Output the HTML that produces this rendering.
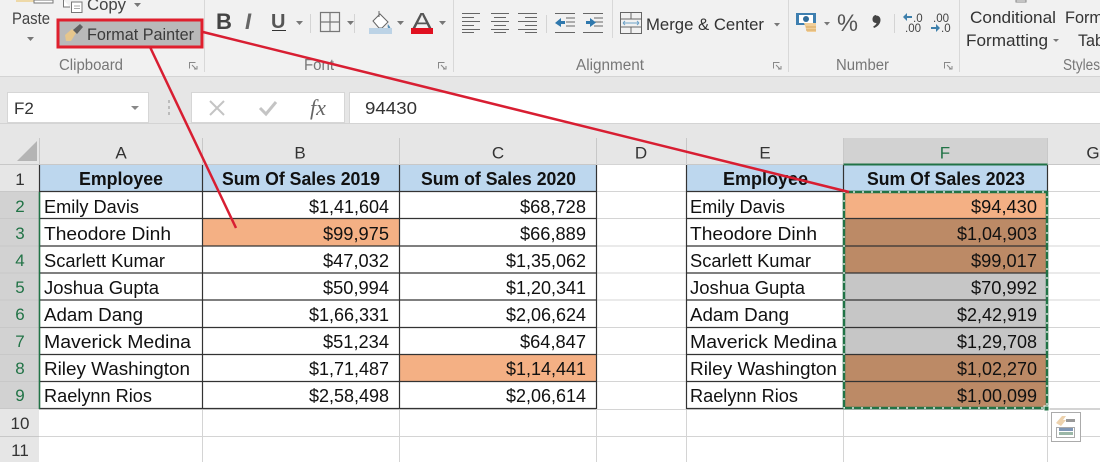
<!DOCTYPE html>
<html><head><meta charset="utf-8"><style>
html,body{margin:0;padding:0;background:#fff;width:1100px;height:462px;overflow:hidden}
svg{display:block}
text{font-family:"Liberation Sans",sans-serif}
.c{font-size:18px;fill:#111}
.b{font-size:18px;font-weight:bold;fill:#111}
.r{font-size:17px;fill:#444}
.g{font-size:15.5px;fill:#777}
.h{font-size:17px;fill:#333}
</style></head><body>
<svg width="1100" height="462" viewBox="0 0 1100 462" xmlns="http://www.w3.org/2000/svg">
<rect width="1100" height="462" fill="#fff"/>
<!-- ribbon -->
<rect width="1100" height="76" fill="#f1f1f1"/>
<rect y="76" width="1100" height="62" fill="#e6e6e6"/>
<rect y="76" width="1100" height="1" fill="#d4d4d4"/>
<g stroke="#d8d8d8" fill="none">
<path d="M204.500 0V72M453.500 0V72M612.500 0V38M788.500 0V72M959.500 0V72"/>
<path d="M310.500 14V33M354.500 14V33M546.500 15V33M894.500 14V33" stroke="#d4d4d4"/>
</g>
<!-- paste -->
<rect x="16" y="0" width="18" height="2" fill="#eed9a8"/><rect x="34" y="0" width="19" height="3" fill="#fff" stroke="#777"/>
<text class="r" x="12" y="24" textLength="38" lengthAdjust="spacingAndGlyphs">Paste</text>
<path d="M27 37h7l-3.500 4z" fill="#777"/>
<!-- copy -->
<path d="M63.500 0V7H70M71.500 2H82V12.500H71.500Z" fill="#fff" stroke="#777"/><path d="M74 6h6M74 8.500h6" stroke="#aaa"/>
<text class="r" x="87" y="10" textLength="39" lengthAdjust="spacingAndGlyphs">Copy</text>
<path d="M134 3h7l-3.500 4z" fill="#777"/>
<!-- format painter -->
<rect x="58" y="20" width="144" height="27" fill="#b9b9b9" stroke="#df1f2d" stroke-width="3"/>
<path d="M65 35l7-6 4 4-5 8h-5z" fill="#e6c68c"/><path d="M73 30l7-6 3 3-6 7z" fill="#5f5f5f"/>
<text x="87" y="40" font-size="16.500" fill="#3b3b3b" textLength="107" lengthAdjust="spacingAndGlyphs">Format Painter</text>
<text class="g" x="59" y="70" textLength="64" lengthAdjust="spacingAndGlyphs">Clipboard</text>
<text class="g" x="304" y="70" textLength="30" lengthAdjust="spacingAndGlyphs">Font</text>
<text class="g" x="576" y="70" textLength="68" lengthAdjust="spacingAndGlyphs">Alignment</text>
<text class="g" x="836" y="70" textLength="53" lengthAdjust="spacingAndGlyphs">Number</text>
<text class="g" x="1063" y="70" textLength="37" lengthAdjust="spacingAndGlyphs">Styles</text>
<g fill="none" stroke="#888"><path d="M189.500 68.500V62.500H195.500M192 65l4 4M194 69h3v-3"/><path d="M438.500 68.500V62.500H444.500M441 65l4 4M443 69h3v-3"/><path d="M773.500 68.500V62.500H779.500M776 65l4 4M778 69h3v-3"/><path d="M944.500 68.500V62.500H950.500M947 65l4 4M949 69h3v-3"/></g>
<!-- font -->
<text x="216" y="29" font-size="22" font-weight="bold" fill="#444">B</text>
<text x="245" y="29" font-size="22" font-weight="bold" font-style="italic" fill="#666">I</text>
<text x="271" y="28" font-size="20" font-weight="bold" fill="#555">U</text><rect x="272" y="30" width="14" height="1" fill="#333"/>
<path d="M296 21h7l-3.500 4zM347 21h7l-3.500 4zM397 21h7l-3.500 4zM439 21h7l-3.500 4z" fill="#777"/>
<path d="M320.500 12.500H339.500V31.500H320.500ZM320.500 22H339.500M330 12.500V31.500" fill="none" stroke="#777" stroke-width="1.200"/>
<path d="M373 21l7-7 8 8-6 6h-3z" fill="#fff" stroke="#666"/><path d="M379 11v6" stroke="#666"/><path d="M388 24c1 2 3 3 2 5-2 0-3-2-2-5z" fill="#5a8fb5"/>
<rect x="369" y="28" width="23" height="6" fill="#bcd3e6"/>
<text x="412" y="29" font-size="23" fill="#555" textLength="20" lengthAdjust="spacingAndGlyphs">A</text><rect x="411" y="28" width="22" height="6" fill="#e01020"/>
<!-- alignment -->
<g stroke="#666" fill="none" stroke-width="1">
<path d="M462 13.500h18M462 17.500h12M462 21.500h18M462 25.500h12M462 29.500h18 M462 32.500h12" />
<path d="M491 13.500h18M494 17.500h12M491 21.500h18M494 25.500h12M491 29.500h18M494 32.500h12"/>
<path d="M518 13.500h19M525 17.500h12M518 21.500h19M525 25.500h12M518 29.500h19M525 32.500h12"/>
<path d="M555 13.500h20M566 18h9M566 22h9M566 26h9M555 32.500h20M583 13.500h20M594 18h9M594 22h9M594 26h9M583 32.500h20"/>
<path d="M620.500 12.500H641.500V33.500H620.500ZM620.500 19H641.500M620.500 27H641.500M631 12.500V19M631 27V33.500"/>
</g>
<path d="M555 23l6-5v3h4v3h-4v3zM590 21v3h-4v-3h4zM590 18l6 4.500-6 4.500z" fill="#2f78ad"/>
<path d="M623 23h16M623 23l2-2M623 23l2 2M639 23l-2-2M639 23l-2 2" stroke="#6da2c8" fill="none"/>
<text x="646" y="30" font-size="17" fill="#333" textLength="118" lengthAdjust="spacingAndGlyphs">Merge &amp; Center</text>
<path d="M774 23h6l-3 3.500z" fill="#777"/>
<!-- number -->
<rect x="796" y="13" width="20" height="12" fill="#3e7fb0"/><rect x="799" y="15" width="14" height="8" fill="#fff"/><circle cx="806" cy="19" r="3" fill="#2f6c9a"/>
<path d="M804 23h12v9h-9z" fill="#f1cf9a"/><path d="M806 27h10M806 30h10" stroke="#d9a860"/>
<path d="M824 22h6l-3 3.500z" fill="#777"/>
<text x="837" y="31" font-size="24" fill="#555" textLength="21" lengthAdjust="spacingAndGlyphs">%</text>
<path d="M876 15.500c3 0 4.500 2 4.500 4.500 0 3.500-2.500 6.500-6.500 8l-.8-1.500c1.800-1 3-2.200 3.300-3.500-2.300 .2-4-1.200-4-3.700 0-2.400 1.500-4.300 3.500-4.300z" fill="#444"/>
<path d="M903 17l4-4v3h5v2h-5v3zM931 27h5v-3l4 4-4 4v-3h-5z" fill="#3d7fab"/>
<text x="913" y="22" font-size="11.500" fill="#444">.0</text><text x="905" y="32" font-size="11.500" fill="#444">.00</text>
<text x="933" y="22" font-size="11.500" fill="#444">.00</text><text x="941" y="32" font-size="11.500" fill="#444">.0</text>
<!-- styles -->
<rect x="1016" y="0" width="10" height="2" fill="#fff" stroke="#888"/>
<text class="h" x="970" y="23" textLength="86" lengthAdjust="spacingAndGlyphs">Conditional</text>
<text class="h" x="966" y="46" textLength="82" lengthAdjust="spacingAndGlyphs">Formatting</text>
<path d="M1053 39h6l-3 3z" fill="#777"/>
<text class="h" x="1065" y="23" textLength="38" lengthAdjust="spacingAndGlyphs">Form</text>
<text class="h" x="1078" y="46" textLength="26" lengthAdjust="spacingAndGlyphs">Tab</text>
<!-- formula bar -->
<rect x="7.500" y="92.500" width="141" height="30" fill="#fff" stroke="#d6d6d6"/>
<text x="14" y="114" font-size="17" fill="#333">F2</text>
<path d="M131 106h8l-4 4z" fill="#888"/>
<rect x="168" y="100" width="2" height="3" fill="#bbb"/><rect x="168" y="106" width="2" height="3" fill="#bbb"/><rect x="168" y="112" width="2" height="3" fill="#bbb"/>
<rect x="191.500" y="92.500" width="153" height="30" fill="#fff" stroke="#d6d6d6"/>
<path d="M210 101l14 14M224 101l-14 14" stroke="#c4c4c4" stroke-width="2" fill="none"/>
<path d="M260 108l6 6 10-12" stroke="#c4c4c4" stroke-width="3" fill="none"/>
<text x="310" y="115" font-size="22" font-style="italic" fill="#666" style="font-family:'Liberation Serif',serif">fx</text>
<rect x="349" y="92" width="751" height="31" fill="#fff"/><path d="M349.500 123V92.500H1100" fill="none" stroke="#d6d6d6"/>
<text x="365" y="114" font-size="17.500" fill="#333" textLength="52" lengthAdjust="spacingAndGlyphs">94430</text>
<rect y="123" width="1100" height="1" fill="#d4d4d4"/>
<!-- headers -->
<rect x="0" y="138" width="1100" height="27" fill="#e6e6e6"/>
<rect x="0" y="165" width="39" height="297" fill="#e6e6e6"/>
<rect x="0" y="192" width="39" height="217" fill="#d2d2d2"/>
<rect x="843" y="138" width="204" height="27" fill="#d2d2d2"/>
<path d="M37 141v20H17z" fill="#b4b4b4"/>
<g stroke="#c8c8c8" fill="none">
<path d="M39.500 138V165M202.500 138V165M399.500 138V165M596.500 138V165M686.500 138V165M843.500 138V165M1047.500 138V165"/>
<path d="M0 164.500H1100M0 191.500H39M0 218.500H39M0 246H39M0 273H39M0 300H39M0 327.500H39M0 354.500H39M0 381.500H39M0 408.500H39M0 436.500H39"/>
</g>
<g font-size="17" text-anchor="middle" fill="#333">
<text x="121" y="158.500">A</text><text x="300" y="158.500">B</text><text x="498" y="158.500">C</text><text x="641" y="158.500">D</text><text x="765" y="158.500">E</text><text x="945" y="158.500" fill="#217346">F</text><text x="1093" y="158.500">G</text>
<text x="20" y="185">1</text></g>
<g font-size="17" text-anchor="middle" fill="#217346">
<text x="20" y="212">2</text><text x="20" y="239">3</text><text x="20" y="266">4</text><text x="20" y="293">5</text><text x="20" y="320">6</text><text x="20" y="347">7</text><text x="20" y="374">8</text><text x="20" y="401">9</text></g>
<g font-size="17" text-anchor="middle" fill="#333"><text x="20" y="429">10</text><text x="20" y="456">11</text></g>
<!-- gridlines -->
<g stroke="#d4d4d4" fill="none">
<path d="M596 164.500H687M596 191.500H687M596 218.500H687M596 246H687M596 273H687M596 300H687M596 327.500H687M596 354.500H687M596 381.500H687M1047 191.500H1100M1047 218.500H1100M1047 246H1100M1047 273H1100M1047 300H1100M1047 327.500H1100M1047 354.500H1100M1047 381.500H1100M1047 408.500H1100"/>
<path d="M39 436.500H1100M39 409.500H1100M686.500 409V462M202.500 409V462M399.500 409V462M596.500 409V462M843.500 409V462M1047.500 165V462"/>
</g>
<!-- fills -->
<rect x="40" y="165" width="556" height="27" fill="#bdd7ee"/>
<rect x="687" y="165" width="360" height="27" fill="#bdd7ee"/>
<rect x="203" y="219" width="196" height="27" fill="#f4b084"/>
<rect x="400" y="355" width="196" height="26" fill="#f4b084"/>
<rect x="844" y="192" width="203" height="27" fill="#f4b084"/>
<rect x="844" y="219" width="203" height="54" fill="#bc8a66"/>
<rect x="844" y="273" width="203" height="81" fill="#c6c6c6"/>
<rect x="844" y="354" width="203" height="55" fill="#bc8a66"/>
<!-- table borders -->
<g stroke="#333" stroke-width="1.200" fill="none">
<path d="M40 191.500H596M40 218.500H596M40 246H596M40 273H596M40 300H596M40 327.500H596M40 354.500H596M40 381.500H596M39 408.500H596"/>
<path d="M39.500 165V409M202.500 165V409M399.500 165V409M596.500 165V409"/>
<path d="M686 191.500H1047M686 218.500H1047M686 246H1047M686 273H1047M686 300H1047M686 327.500H1047M686 354.500H1047M686 381.500H1047M686 408.500H1047"/>
<path d="M686.500 165V409M843.500 165V409M1047.500 165V409"/>
<path d="M843.500 164.500H1047.500" stroke="#217346" stroke-width="2"/>
<path d="M39.500 192V409" stroke="#217346" stroke-width="1.500"/>
</g>
<!-- header text -->
<text class="b" x="79" y="185" textLength="84" lengthAdjust="spacingAndGlyphs">Employee</text>
<text class="b" x="222" y="185" textLength="158" lengthAdjust="spacingAndGlyphs">Sum Of Sales 2019</text>
<text class="b" x="421" y="185" textLength="155" lengthAdjust="spacingAndGlyphs">Sum of Sales 2020</text>
<text class="b" x="723" y="185" textLength="85" lengthAdjust="spacingAndGlyphs">Employee</text>
<text class="b" x="867" y="185" textLength="158" lengthAdjust="spacingAndGlyphs">Sum Of Sales 2023</text>
<!-- names -->
<g class="c">
<text class="c" x="44" y="213" textLength="95" lengthAdjust="spacingAndGlyphs">Emily Davis</text>
<text class="c" x="44" y="240" textLength="127" lengthAdjust="spacingAndGlyphs">Theodore Dinh</text>
<text class="c" x="44" y="267" textLength="121" lengthAdjust="spacingAndGlyphs">Scarlett Kumar</text>
<text class="c" x="44" y="294" textLength="115" lengthAdjust="spacingAndGlyphs">Joshua Gupta</text>
<text class="c" x="44" y="321" textLength="99" lengthAdjust="spacingAndGlyphs">Adam Dang</text>
<text class="c" x="44" y="348" textLength="147" lengthAdjust="spacingAndGlyphs">Maverick Medina</text>
<text class="c" x="44" y="375" textLength="146" lengthAdjust="spacingAndGlyphs">Riley Washington</text>
<text class="c" x="44" y="402" textLength="108" lengthAdjust="spacingAndGlyphs">Raelynn Rios</text>
<text class="c" x="690" y="213" textLength="95" lengthAdjust="spacingAndGlyphs">Emily Davis</text>
<text class="c" x="690" y="240" textLength="127" lengthAdjust="spacingAndGlyphs">Theodore Dinh</text>
<text class="c" x="690" y="267" textLength="121" lengthAdjust="spacingAndGlyphs">Scarlett Kumar</text>
<text class="c" x="690" y="294" textLength="115" lengthAdjust="spacingAndGlyphs">Joshua Gupta</text>
<text class="c" x="690" y="321" textLength="99" lengthAdjust="spacingAndGlyphs">Adam Dang</text>
<text class="c" x="690" y="348" textLength="147" lengthAdjust="spacingAndGlyphs">Maverick Medina</text>
<text class="c" x="690" y="375" textLength="147" lengthAdjust="spacingAndGlyphs">Riley Washington</text>
<text class="c" x="690" y="402" textLength="108" lengthAdjust="spacingAndGlyphs">Raelynn Rios</text>
</g>
<!-- numbers: B -->
<text class="c" x="309" y="213" textLength="80" lengthAdjust="spacingAndGlyphs">$1,41,604</text>
<text class="c" x="323" y="240" textLength="66" lengthAdjust="spacingAndGlyphs">$99,975</text>
<text class="c" x="323" y="267" textLength="66" lengthAdjust="spacingAndGlyphs">$47,032</text>
<text class="c" x="323" y="294" textLength="66" lengthAdjust="spacingAndGlyphs">$50,994</text>
<text class="c" x="309" y="321" textLength="80" lengthAdjust="spacingAndGlyphs">$1,66,331</text>
<text class="c" x="323" y="348" textLength="66" lengthAdjust="spacingAndGlyphs">$51,234</text>
<text class="c" x="309" y="375" textLength="80" lengthAdjust="spacingAndGlyphs">$1,71,487</text>
<text class="c" x="309" y="402" textLength="80" lengthAdjust="spacingAndGlyphs">$2,58,498</text>
<!-- C -->
<text class="c" x="520" y="213" textLength="66" lengthAdjust="spacingAndGlyphs">$68,728</text>
<text class="c" x="520" y="240" textLength="66" lengthAdjust="spacingAndGlyphs">$66,889</text>
<text class="c" x="506" y="267" textLength="80" lengthAdjust="spacingAndGlyphs">$1,35,062</text>
<text class="c" x="506" y="294" textLength="80" lengthAdjust="spacingAndGlyphs">$1,20,341</text>
<text class="c" x="506" y="321" textLength="80" lengthAdjust="spacingAndGlyphs">$2,06,624</text>
<text class="c" x="520" y="348" textLength="66" lengthAdjust="spacingAndGlyphs">$64,847</text>
<text class="c" x="506" y="375" textLength="80" lengthAdjust="spacingAndGlyphs">$1,14,441</text>
<text class="c" x="506" y="402" textLength="80" lengthAdjust="spacingAndGlyphs">$2,06,614</text>
<!-- F -->
<text class="c" x="971" y="213" textLength="66" lengthAdjust="spacingAndGlyphs">$94,430</text>
<text class="c" x="957" y="240" textLength="80" lengthAdjust="spacingAndGlyphs">$1,04,903</text>
<text class="c" x="971" y="267" textLength="66" lengthAdjust="spacingAndGlyphs">$99,017</text>
<text class="c" x="971" y="294" textLength="66" lengthAdjust="spacingAndGlyphs">$70,992</text>
<text class="c" x="957" y="321" textLength="80" lengthAdjust="spacingAndGlyphs">$2,42,919</text>
<text class="c" x="957" y="348" textLength="80" lengthAdjust="spacingAndGlyphs">$1,29,708</text>
<text class="c" x="957" y="375" textLength="80" lengthAdjust="spacingAndGlyphs">$1,02,270</text>
<text class="c" x="957" y="402" textLength="80" lengthAdjust="spacingAndGlyphs">$1,00,099</text>
<!-- marching ants -->
<rect x="844" y="192" width="203" height="216" fill="none" stroke="#217346" stroke-width="2.500"/>
<rect x="844" y="192" width="203" height="216" fill="none" stroke="#fff" stroke-width="1.200" stroke-dasharray="2 7"/>
<rect x="1044" y="406" width="5" height="5" fill="#217346" stroke="#fff" stroke-width="1"/>
<!-- paste options -->
<rect x="1051.500" y="412.500" width="29" height="29" fill="#fff" stroke="#ababab"/>
<path d="M1056 423l6-7h4l-3 4h3l-5 6z" fill="#edd2ad"/>
<rect x="1066" y="419" width="9" height="3" fill="#999"/>
<path d="M1056.500 427.500H1074.500V437.500H1056.500Z" fill="#fff" stroke="#aaa"/>
<rect x="1059" y="428" width="14" height="3" fill="#7f96b5"/><rect x="1059" y="432" width="14" height="3" fill="#9bb7a7"/>
<!-- red arrows -->
<g stroke="#d81e32" stroke-width="2.500" fill="none">
<path d="M203 32L849 192"/>
<path d="M150 47L236 228"/>
</g>
</svg>
</body></html>
